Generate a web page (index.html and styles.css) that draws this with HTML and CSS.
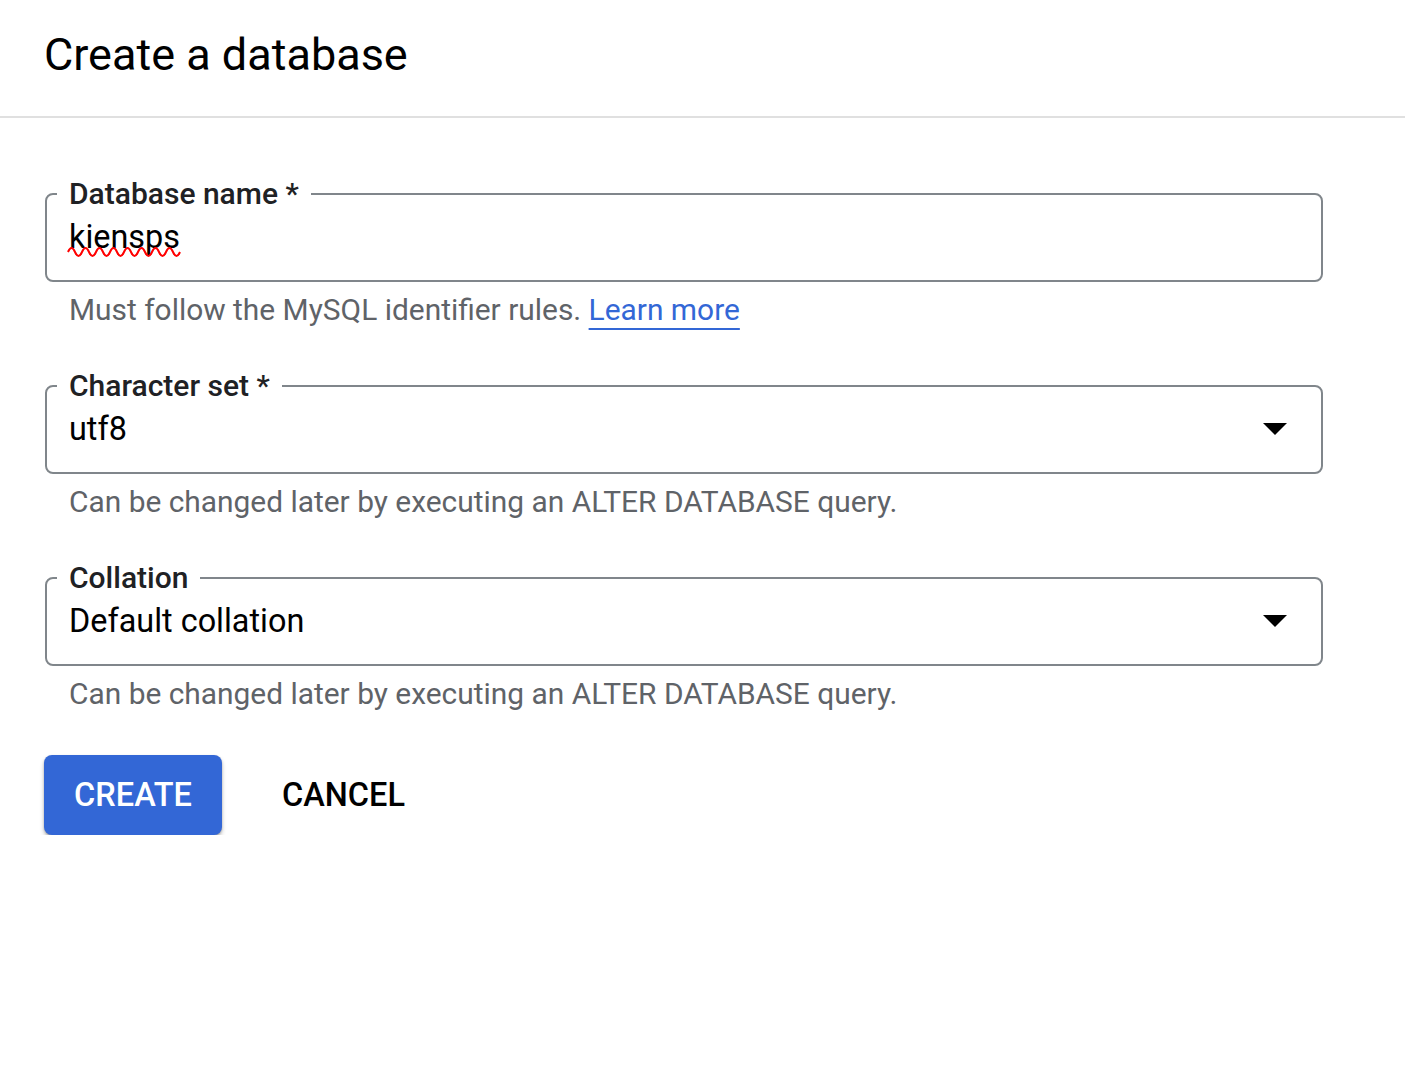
FILE: index.html
```html
<!DOCTYPE html>
<html lang="en">
<head>
<meta charset="utf-8">
<title>Create a database</title>
<link rel="stylesheet" href="styles.css">
</head>
<body>
<header class="page-header">
  <h1 class="page-title">Create a database</h1>
</header>
<main class="form">
  <div class="field">
    <fieldset class="outline">
      <legend class="label">Database name *</legend>
      <div class="value"><span class="misspelled">kiensps<svg class="squiggle" width="114" height="12" viewBox="0 0 114 12"><path d="M1,6 Q4.5,-2 8,6 T15,6 T22,6 T29,6 T36,6 T43,6 T50,6 T57,6 T64,6 T71,6 T78,6 T85,6 T92,6 T99,6 T106,6 T113,6" fill="none" stroke="#f00" stroke-width="2"/></svg></span></div>
    </fieldset>
    <div class="hint">Must follow the MySQL identifier rules. <a class="link" href="#">Learn more</a></div>
  </div>
  <div class="field">
    <fieldset class="outline">
      <legend class="label">Character set *</legend>
      <div class="value select"><span>utf8</span>
        <svg class="caret" width="24" height="12" viewBox="0 0 24 12"><polygon points="0,0 24,0 12,12" fill="#000"/></svg>
      </div>
    </fieldset>
    <div class="hint">Can be changed later by executing an ALTER DATABASE query.</div>
  </div>
  <div class="field">
    <fieldset class="outline">
      <legend class="label">Collation</legend>
      <div class="value select"><span>Default collation</span>
        <svg class="caret" width="24" height="12" viewBox="0 0 24 12"><polygon points="0,0 24,0 12,12" fill="#000"/></svg>
      </div>
    </fieldset>
    <div class="hint">Can be changed later by executing an ALTER DATABASE query.</div>
  </div>
  <div class="actions">
    <button class="btn btn-primary" type="button">CREATE</button>
    <button class="btn btn-text" type="button">CANCEL</button>
  </div>
</main>
</body>
</html>
```

FILE: styles.css
```css
* { box-sizing: border-box; }
html, body { margin: 0; padding: 0; background: #fff; }
body {
  font-family: Roboto, "Liberation Sans", Arial, sans-serif;
  color: #202124;
}
.page-header {
  padding: 27px 44px 33px;
  border-bottom: 2px solid #e0e0e0;
}
.page-title {
  margin: 0;
  font-size: 45px;
  line-height: 56px;
  font-weight: 400;
  color: #000;
}
.form {
  padding: 61px 0 0 45px;
  width: 1323px;
}
.field { margin-bottom: 43px; }
.field:last-of-type { margin-bottom: 41px; }
.outline {
  margin: 0;
  border: 2px solid #80868b;
  border-radius: 8px;
  padding: 0 22px;
  min-width: 0;
}
.label {
  font-size: 30px;
  line-height: 30px;
  font-weight: 500;
  color: #202124;
  padding: 0 12px;
  margin-left: -12px;
}
.value {
  font-size: 32.4px;
  line-height: 40px;
  padding: 8px 0 23px;
  color: #000;
  display: flex;
  align-items: center;
  justify-content: space-between;
}
.misspelled {
  position: relative;
}
.squiggle {
  position: absolute;
  left: -2px;
  top: 29px;
}
.caret { margin-right: 12px; }
.hint {
  margin-top: 10px;
  padding-left: 24px;
  font-size: 29.9px;
  line-height: 36px;
  color: #5f6368;
}
.link {
  color: #3367d6;
  text-decoration: underline;
  text-decoration-thickness: 2px;
  text-underline-offset: 8px;
}
.actions {
  display: flex;
  align-items: center;
  gap: 30px;
  margin-left: -1px;
}
.btn {
  font-family: Roboto, "Liberation Sans", Arial, sans-serif;
  font-size: 32.5px;
  font-weight: 500;
  height: 80px;
  padding: 0 30px;
  border: 0;
  border-radius: 8px;
  background: transparent;
  color: #000;
}
.btn-primary {
  width: 178px;
  padding: 0;
  background: #3367d6;
  color: #fff;
  box-shadow: 0 3px 4px rgba(0,0,0,0.25), 0 1px 2px rgba(0,0,0,0.2);
}
```
